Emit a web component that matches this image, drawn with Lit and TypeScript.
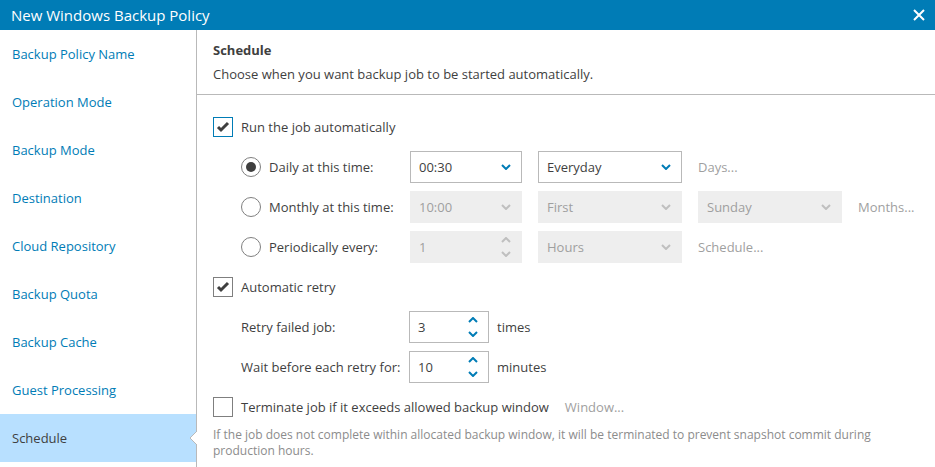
import { LitElement, html, css, svg, nothing } from "lit";
import { customElement, property, state } from "lit/decorators.js";
import { classMap } from "lit/directives/class-map.js";

const down = svg`<path d="M1 1L5 5L9 1" />`;
const up = svg`<path d="M1 5L5 1L9 5" />`;

const base = css`
  * {
    box-sizing: border-box;
  }
  button,
  input,
  select {
    margin: 0;
    font: inherit;
    color: inherit;
  }
  .chevron {
    display: block;
    width: 10px;
    height: 6px;
    fill: none;
    stroke: #007cb6;
    stroke-width: 2;
  }
`;

@customElement("drop-down")
export class DropDown extends LitElement {
  @property() label = "";
  @property() value = "";
  @property({ type: Boolean }) disabled = false;

  static styles = [
    base,
    css`
      :host {
        display: grid;
        height: 32px;
      }
      .select,
      .chevron {
        grid-area: 1 / 1;
      }
      .select {
        appearance: none;
        width: 100%;
        height: 32px;
        padding: 0 24px 0 8px;
        border: 1px solid #b9b9b9;
        border-radius: 0;
        background: #fff;
        color: #3f3f3f;
      }
      .select:disabled {
        border-color: #eee;
        background: #eee;
        color: #9f9f9f;
        opacity: 1;
      }
      .chevron {
        place-self: center end;
        margin-right: 11px;
        pointer-events: none;
      }
      .select:disabled + .chevron {
        stroke: #bfbfbf;
      }
    `,
  ];

  render() {
    return html`
      <select class="select" aria-label=${this.label} ?disabled=${this.disabled}>
        <option>${this.value}</option>
      </select>
      <svg class="chevron" viewBox="0 0 10 6" aria-hidden="true">${down}</svg>
    `;
  }
}

@customElement("spin-box")
export class SpinBox extends LitElement {
  @property() label = "";
  @property({ type: Number }) value = 1;
  @property({ type: Boolean }) disabled = false;

  static styles = [
    base,
    css`
      :host {
        display: block;
        height: 32px;
      }
      .box {
        display: flex;
        height: 32px;
        border: 1px solid #b9b9b9;
        background: #fff;
        color: #3f3f3f;
      }
      .input {
        flex: 1;
        min-width: 0;
        padding: 0 0 0 8px;
        border: 0;
        outline: 0;
        background: none;
      }
      .arrows {
        display: flex;
        flex-direction: column;
        justify-content: center;
        gap: 2px;
        padding-right: 10px;
      }
      .arrow {
        display: flex;
        align-items: center;
        height: 12px;
        padding: 0;
        border: 0;
        background: none;
      }
      .off {
        border-color: #eee;
        background: #eee;
        color: #9f9f9f;
      }
      .off .chevron {
        stroke: #bfbfbf;
      }
    `,
  ];

  private step(by: number) {
    this.value = Math.max(1, this.value + by);
  }

  render() {
    return html`
      <div class=${classMap({ box: true, off: this.disabled })}>
        <input
          class="input"
          type="text"
          inputmode="numeric"
          aria-label=${this.label}
          .value=${String(this.value)}
          ?disabled=${this.disabled}
        />
        <div class="arrows">
          <button class="arrow" aria-label="Increase" ?disabled=${this.disabled} @click=${() => this.step(1)}>
            <svg class="chevron" viewBox="0 0 10 6">${up}</svg>
          </button>
          <button class="arrow" aria-label="Decrease" ?disabled=${this.disabled} @click=${() => this.step(-1)}>
            <svg class="chevron" viewBox="0 0 10 6">${down}</svg>
          </button>
        </div>
      </div>
    `;
  }
}

@customElement("app-root")
export class AppRoot extends LitElement {
  @state() private step = "Schedule";

  private steps = [
    "Backup Policy Name",
    "Operation Mode",
    "Backup Mode",
    "Destination",
    "Cloud Repository",
    "Backup Quota",
    "Backup Cache",
    "Guest Processing",
    "Schedule",
  ];

  static styles = [
    base,
    css`
      :host {
        display: flex;
        flex-direction: column;
        min-height: 100vh;
        background: #fff;
        color: #3f3f3f;
        font: 13px/20px "Open Sans", "Noto Sans", sans-serif;
      }
      .titlebar {
        display: flex;
        align-items: center;
        justify-content: space-between;
        height: 30px;
        padding: 0 10px 0 11px;
        background: #007cb6;
        color: #fff;
      }
      .title {
        margin: 0;
        font-size: 15px;
        font-weight: 400;
      }
      .close {
        padding: 0;
        border: 0;
        background: none;
      }
      .close-icon {
        display: block;
        width: 12px;
        height: 12px;
        fill: none;
        stroke: #fff;
        stroke-width: 2;
      }
      .layout {
        display: flex;
        flex: 1;
      }
      .steps {
        flex: none;
        width: 197px;
        border-right: 1px solid #b9b9b9;
      }
      .step {
        position: relative;
        display: flex;
        align-items: center;
        height: 48px;
        padding-left: 12px;
        color: #007cb6;
        text-decoration: none;
      }
      .current {
        background: #b8e0ff;
        color: #3f3f3f;
      }
      .notch {
        position: absolute;
        right: -1px;
        top: 17px;
        width: 8px;
        height: 14px;
        fill: #fff;
        stroke: #b9b9b9;
      }
      .panel {
        flex: 1;
        min-width: 0;
      }
      .intro {
        padding: 10px 16px;
        border-bottom: 1px solid #b9b9b9;
      }
      .heading {
        margin: 0 0 4px;
        font-size: 13px;
        font-weight: 700;
      }
      .text {
        margin: 0;
      }
      .form {
        padding: 12px 16px 0;
      }
      .row {
        display: flex;
        align-items: center;
        gap: 16px;
        height: 40px;
      }
      .inner {
        padding-left: 28px;
      }
      .choice {
        display: flex;
        align-items: center;
        gap: 8px;
      }
      .time {
        width: 153px;
      }
      .mark {
        display: grid;
      }
      .tick,
      .check {
        grid-area: 1 / 1;
        width: 20px;
        height: 20px;
      }
      .tick {
        appearance: none;
        border: 1px solid #7f7f7f;
        background: #fff;
      }
      .focused {
        border-color: #007cb6;
      }
      .check {
        visibility: hidden;
        fill: none;
        stroke: #3f3f3f;
        stroke-width: 3;
        pointer-events: none;
      }
      .tick:checked + .check {
        visibility: visible;
      }
      .radio {
        appearance: none;
        display: grid;
        place-items: center;
        width: 20px;
        height: 20px;
        border: 1px solid #7f7f7f;
        border-radius: 50%;
      }
      .radio:checked::before {
        content: "";
        width: 10px;
        height: 10px;
        border-radius: 50%;
        background: #3f3f3f;
      }
      .narrow {
        width: 112px;
      }
      .wide {
        width: 144px;
      }
      .retry {
        gap: 8px;
      }
      .retry-label {
        width: 160px;
        white-space: nowrap;
      }
      .count {
        width: 80px;
      }
      .more {
        padding: 0;
        border: 0;
        background: none;
        color: #9f9f9f;
      }
      .note {
        margin: 0;
        padding-right: 32px;
        color: #8c8c8c;
        font-size: 12px;
        line-height: 16px;
      }
    `,
  ];

  private tick(label: string, checked: boolean, focused = false) {
    return html`
      <label class="choice">
        <span class="mark">
          <input class=${classMap({ tick: true, focused })} type="checkbox" .checked=${checked} />
          <svg class="check" viewBox="0 0 20 20" aria-hidden="true">
            <path d="M5 10L8 13L15 6" />
          </svg>
        </span>
        ${label}
      </label>
    `;
  }

  private radio(label: string, checked: boolean) {
    return html`
      <label class="choice time">
        <input class="radio" type="radio" name="mode" .checked=${checked} />
        ${label}
      </label>
    `;
  }

  private more(label: string) {
    return html`<button class="more" disabled>${label}</button>`;
  }

  private retry(label: string, value: number, unit: string) {
    return html`
      <div class="row inner retry">
        <span class="retry-label">${label}</span>
        <spin-box class="count" .label=${label} .value=${value}></spin-box>
        <span>${unit}</span>
      </div>
    `;
  }

  render() {
    return html`
      <header class="titlebar">
        <h1 class="title">New Windows Backup Policy</h1>
        <button class="close" aria-label="Close">
          <svg class="close-icon" viewBox="0 0 12 12"><path d="M1 1L11 11M11 1L1 11" /></svg>
        </button>
      </header>
      <div class="layout">
        <nav class="steps">
          ${this.steps.map(
            (name) => html`
              <a
                class=${classMap({ step: true, current: name === this.step })}
                href="#"
                @click=${(e: Event) => {
                  e.preventDefault();
                  this.step = name;
                }}
                >${name}${name === this.step
                  ? html`<svg class="notch" viewBox="0 0 8 14" aria-hidden="true">
                      <path d="M8 0L1 7L8 14" />
                    </svg>`
                  : nothing}</a
              >
            `,
          )}
        </nav>
        <main class="panel">
          <div class="intro">
            <h2 class="heading">Schedule</h2>
            <p class="text">Choose when you want backup job to be started automatically.</p>
          </div>
          <form class="form" @submit=${(e: Event) => e.preventDefault()}>
            <div class="row">${this.tick("Run the job automatically", true, true)}</div>
            <div class="row inner">
              ${this.radio("Daily at this time:", true)}
              <drop-down class="narrow" label="Daily time" value="00:30"></drop-down>
              <drop-down class="wide" label="Days" value="Everyday"></drop-down>
              ${this.more("Days...")}
            </div>
            <div class="row inner">
              ${this.radio("Monthly at this time:", false)}
              <drop-down class="narrow" label="Monthly time" value="10:00" disabled></drop-down>
              <drop-down class="wide" label="Week" value="First" disabled></drop-down>
              <drop-down class="wide" label="Day" value="Sunday" disabled></drop-down>
              ${this.more("Months...")}
            </div>
            <div class="row inner">
              ${this.radio("Periodically every:", false)}
              <spin-box class="narrow" label="Period" .value=${1} disabled></spin-box>
              <drop-down class="wide" label="Unit" value="Hours" disabled></drop-down>
              ${this.more("Schedule...")}
            </div>
            <div class="row">${this.tick("Automatic retry", true)}</div>
            ${this.retry("Retry failed job:", 3, "times")}
            ${this.retry("Wait before each retry for:", 10, "minutes")}
            <div class="row">
              ${this.tick("Terminate job if it exceeds allowed backup window", false)}
              ${this.more("Window...")}
            </div>
            <p class="note">
              If the job does not complete within allocated backup window, it will be terminated to prevent snapshot
              commit during production hours.
            </p>
          </form>
        </main>
      </div>
    `;
  }
}
